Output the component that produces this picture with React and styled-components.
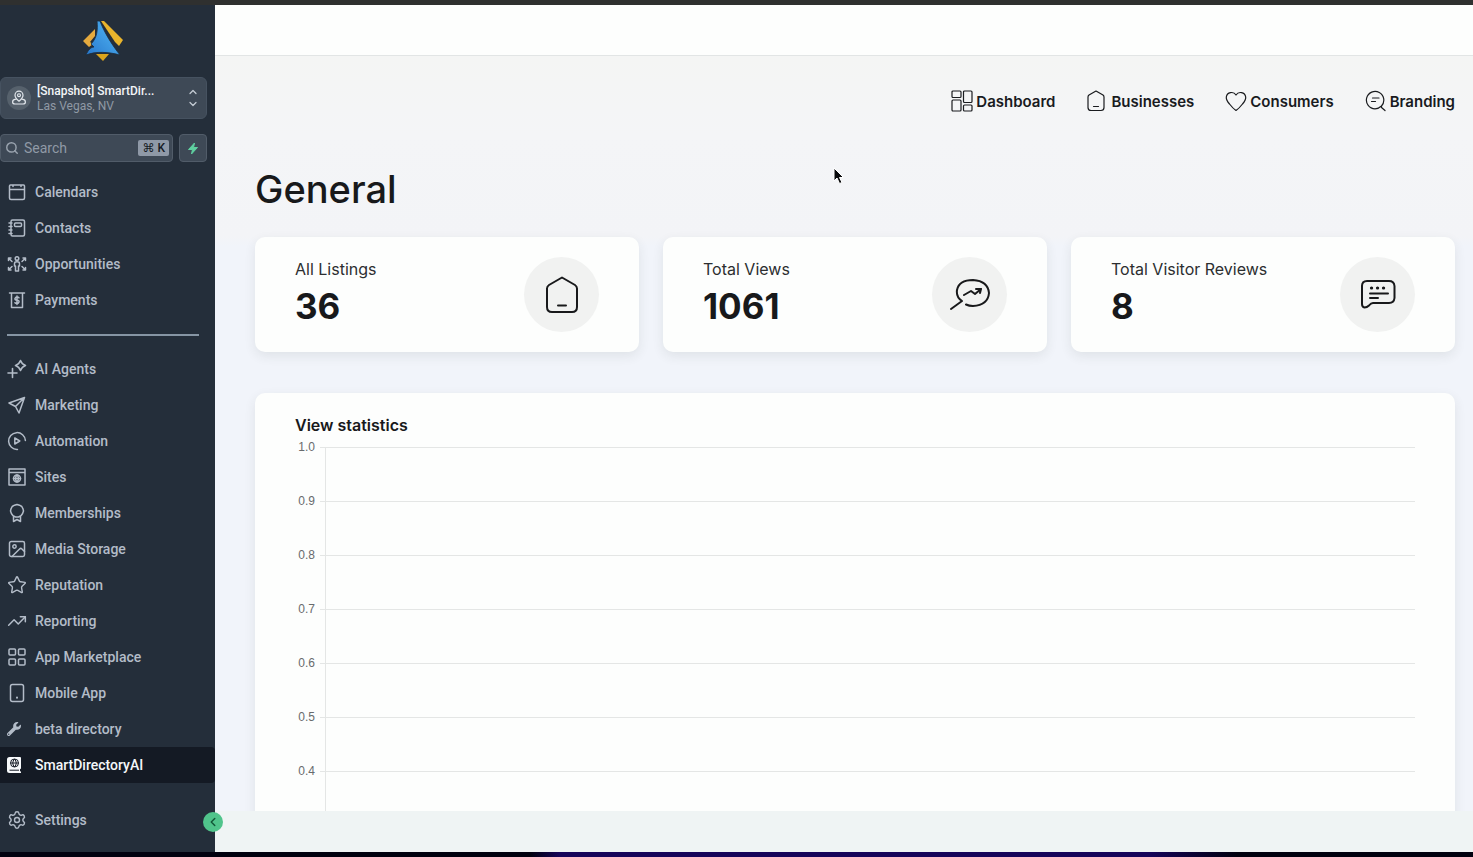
import React, { useState } from 'react';
import styled, { createGlobalStyle } from 'styled-components';
import { Search, Star, TrendingUp, Image, Settings, ChevronLeft, ChevronUp, ChevronDown } from 'lucide-react';
import { FaWrench } from 'react-icons/fa';

const GlobalStyle = createGlobalStyle`
  * {
    box-sizing: border-box;
  }
  body {
    margin: 0;
    font-family: Inter, "Liberation Sans", sans-serif;
    color: #18191b;
  }
  button, input {
    font: inherit;
    color: inherit;
  }
`;

const Shell = styled.div`
  display: flex;
  flex-direction: column;
  height: 100vh;
  position: relative;
`;

const TopEdge = styled.div`
  flex: 0 0 5px;
  background: #2f302f;
`;

const BottomEdge = styled.div`
  flex: 0 0 5px;
  background: linear-gradient(90deg, #01010f 0 36%, #16045a 38% 78%, #01010f 84%);
`;

const Body = styled.div`
  display: flex;
  flex: 1;
  min-height: 0;
`;

const Sidebar = styled.aside`
  flex: 0 0 215px;
  display: flex;
  flex-direction: column;
  position: relative;
  background: #242e3a;
  color: #b3bcc8;
  font-family: Roboto, sans-serif;
`;

const LogoLink = styled.a`
  display: flex;
  justify-content: center;
  padding: 15px 9px 15px 0;
`;

const AccountButton = styled.button`
  display: flex;
  align-items: center;
  gap: 6px;
  height: 42px;
  margin-right: 8px;
  padding: 0 7px 0 6px;
  border: 1px solid #465260;
  border-radius: 6px;
  background: #3e4956;
  text-align: left;
  cursor: pointer;
`;

const AccountIcon = styled.span`
  display: flex;
  align-items: center;
  justify-content: center;
  width: 24px;
  height: 24px;
  border-radius: 50%;
  background: #56616c;
  color: #e3e8ed;
`;

const AccountText = styled.span`
  flex: 1;
  display: flex;
  flex-direction: column;
  padding-top: 2px;
  font-size: 12px;
  line-height: 15px;
  color: #9099a5;
`;

const AccountName = styled.span`
  color: #f3f5f8;
  font-weight: 500;
`;

const Chevrons = styled.span`
  display: flex;
  flex-direction: column;
  color: #c4cbd4;
`;

const SearchRow = styled.div`
  display: flex;
  gap: 6px;
  margin: 15px 8px 12px 0;
`;

const SearchBox = styled.label`
  flex: 1;
  display: flex;
  align-items: center;
  gap: 5px;
  height: 28px;
  padding: 0 3px 0 4px;
  border: 1px solid #515c69;
  border-radius: 4px;
  background: #3e4956;
  color: #99a3ae;
`;

const SearchInput = styled.input`
  flex: 1;
  width: 0;
  padding: 0;
  border: 0;
  outline: 0;
  background: none;
  font-size: 14px;
  &::placeholder {
    color: #909aa6;
    opacity: 1;
  }
`;

const Shortcut = styled.kbd`
  padding: 0 4px;
  border-radius: 2px;
  background: #8f99a7;
  color: #151b24;
  font: 500 12px/16px Roboto, "DejaVu Sans", sans-serif;
`;

const QuickButton = styled.button`
  display: flex;
  align-items: center;
  justify-content: center;
  width: 28px;
  height: 28px;
  padding: 0;
  border: 1px solid #515c69;
  border-radius: 4px;
  background: #3e4956;
  cursor: pointer;
`;

const MenuLink = styled.a`
  display: flex;
  align-items: center;
  gap: 8px;
  height: 36px;
  padding: 0 7px;
  border-radius: 0 4px 4px 0;
  background: ${props => (props.$active ? '#141a24' : 'transparent')};
  color: ${props => (props.$active ? '#f5f7fa' : 'inherit')};
  font-size: 14px;
  font-weight: 500;
  text-decoration: none;
  svg {
    flex: none;
  }
`;

const Divider = styled.hr`
  width: 192px;
  height: 2px;
  margin: 16px 7px 15px;
  border: 0;
  background: #8695a4;
`;

const SidebarFooter = styled.div`
  margin-top: auto;
  padding-bottom: 14px;
`;

const CollapseButton = styled.button`
  position: absolute;
  right: -8px;
  bottom: 20px;
  z-index: 1;
  display: flex;
  align-items: center;
  justify-content: center;
  width: 20px;
  height: 20px;
  padding: 0;
  border: 0;
  border-radius: 50%;
  background: #50c48b;
  color: #125637;
  cursor: pointer;
`;

const Main = styled.main`
  flex: 1;
  min-width: 0;
  display: flex;
  flex-direction: column;
  background: #eff4f4;
`;

const TopBar = styled.header`
  flex: 0 0 51px;
  border-bottom: 1px solid #e2e5e5;
  background: #fdfefd;
`;

const Content = styled.div`
  flex: 1;
  min-height: 0;
  margin-bottom: 41px;
  padding: 30px 18px 0 40px;
  overflow: auto;
  scrollbar-width: none;
  background: linear-gradient(#f4f5f4, #f4f5f7 80px, #f3f4f7 180px, #f1f4fa 190px);
`;

const TopNav = styled.nav`
  display: flex;
  justify-content: flex-end;
  gap: 31px;
`;

const TopNavLink = styled.a`
  display: flex;
  align-items: center;
  gap: 3px;
  height: 30px;
  color: #191b1e;
  font-size: 15px;
  font-weight: 600;
  text-decoration: none;
`;

const Title = styled.h1`
  margin: 50px 0 24px;
  font-size: 38px;
  line-height: 47px;
  font-weight: 500;
`;

const Cards = styled.section`
  display: grid;
  grid-template-columns: repeat(3, 1fr);
  gap: 24px;
  margin-bottom: 41px;
`;

const Card = styled.article`
  display: flex;
  justify-content: space-between;
  align-items: flex-start;
  padding: 20px 40px;
  border-radius: 10px;
  background: #fdfefd;
  box-shadow: 0 4px 12px rgba(40, 50, 40, 0.09);
`;

const CardLabel = styled.div`
  font-size: 16px;
  line-height: 24px;
  color: #2c2e30;
`;

const CardValue = styled.div`
  font-size: 35px;
  line-height: 50px;
  font-weight: 700;
`;

const IconCircle = styled.div`
  display: flex;
  align-items: center;
  justify-content: center;
  width: 75px;
  height: 75px;
  border-radius: 50%;
  background: #f1f2f1;
`;

const ChartCard = styled.section`
  padding: 20px 40px;
  border-radius: 10px;
  background: #fdfefd;
  box-shadow: 0 4px 12px rgba(40, 50, 40, 0.09);
`;

const ChartTitle = styled.h2`
  margin: 0;
  font-size: 16px;
  line-height: 24px;
  font-weight: 600;
`;

const ChartSvg = styled.svg`
  display: block;
  width: 100%;
  height: 570px;
  text {
    fill: #686b6d;
    font: 12px "Liberation Sans", Arial, sans-serif;
    text-anchor: end;
  }
  line {
    stroke: #e4e6e5;
    shape-rendering: crispEdges;
  }
`;

const Pointer = styled.svg`
  position: absolute;
  left: 832px;
  top: 166px;
  pointer-events: none;
`;

function Icon({ children, size = 20, box = 20, width = 1.5 }) {
  return (
    <svg
      width={size}
      height={size}
      viewBox={`0 0 ${box} ${box}`}
      fill="none"
      stroke="currentColor"
      strokeWidth={width}
      strokeLinecap="round"
      strokeLinejoin="round"
      aria-hidden="true"
    >
      {children}
    </svg>
  );
}

function Logo() {
  return (
    <svg width="42" height="42" viewBox="0 0 42 42" aria-label="Home">
      <defs>
        <linearGradient id="sail" x1="0" y1="1" x2="1" y2="0">
          <stop offset="0" stopColor="#2878cc" />
          <stop offset="0.6" stopColor="#43a1e7" />
          <stop offset="1" stopColor="#328ede" />
        </linearGradient>
      </defs>
      <path d="M13 9 1 21 7 27 11 24 8 22 13 16Z" fill="#e5aa3e" />
      <path d="M19 1H22L41 20 37 26 33 22Z" fill="#e9b42c" />
      <path d="M14 34H27L21 41Z" fill="#daa41d" />
      <path d="M15 1H18C22 12 30 25 38 35 27 32 14 31 4 35 6 30 9 27 12 27L9 24C15 18 16 10 15 1Z" fill="url(#sail)" stroke="#1d2c3c" strokeWidth="0.8" />
    </svg>
  );
}

const icons = {
  calendar: (
    <Icon>
      <path d="M3.500 3h13a1 1 0 0 1 1 1v12a1.500 1.500 0 0 1-1.500 1.500H4A1.500 1.500 0 0 1 2.500 16V4a1 1 0 0 1 1-1ZM2.500 7.500h15M6 3v1.500M14 3v1.500" />
    </Icon>
  ),
  contacts: (
    <Icon>
      <rect x="4" y="2" width="13.500" height="16" rx="1.500" />
      <rect x="7.500" y="5" width="7" height="3.500" rx="1" />
      <path d="M2 5h3M2 8.500h3M2 12h3M2 15.500h3" />
    </Icon>
  ),
  opportunities: (
    <Icon>
      <circle cx="10" cy="4.500" r="1.800" />
      <path d="M7.500 11V9.500Q7.500 7.800 10 7.800T12.500 9.500V12H11.500V17H8.500V12H7.500Z" />
      <path d="M1.500 6.500V4H4M1.500 4 5 7.500M18.500 6.500V4H16M18.500 4 15 7.500M1.500 13.500V16H4M1.500 16 5 12.500M18.500 13.500V16H16M18.500 16 15 12.500" />
    </Icon>
  ),
  payments: (
    <Icon>
      <path d="M2.500 3h15M4.500 3v14.500h11V3" />
      <path d="M12 7.800Q11.500 7 10 7T8 8.500 10 10.200 12 12 10 13.500 8 12.700M10 6v8.500" />
    </Icon>
  ),
  agents: (
    <Icon width={1.6}>
      <path d="M13.500 1.500Q14.800 5.200 18.500 6.500 14.800 7.800 13.500 11.500 12.200 7.800 8.500 6.500 12.200 5.200 13.500 1.500ZM5.500 9.500v9M1 14h9" />
    </Icon>
  ),
  marketing: (
    <Icon>
      <path d="M17.500 2.500 2 8l6.500 3.500L12 18ZM8.500 11.500l9-9" />
    </Icon>
  ),
  automation: (
    <Icon>
      <path d="M10.500 18.400A8.400 8.400 0 1 1 18.400 9.500M7.800 7v6l5-3Z" />
    </Icon>
  ),
  sites: (
    <Icon>
      <path d="M2 2h16v16H2ZM2 5.500h16" />
      <circle cx="10" cy="11.500" r="3.500" />
      <path d="M6.500 11.500h7M10 8Q7 11.500 10 15M10 8q3 3.500 0 7" />
    </Icon>
  ),
  memberships: (
    <Icon>
      <path d="M10 1.500 12.500 2.200 14.800 3.500 16 5.800 16.500 8 15.600 10.500 14 12.700 11.500 14H8.500L6 12.700 4.400 10.500 3.500 8 4 5.800 5.200 3.500 7.500 2.200ZM6.500 13.200V18.500L10 16.500 13.500 18.500V13.200" />
    </Icon>
  ),
  media: <Image size={20} strokeWidth={1.8} />,
  reputation: <Star size={20} strokeWidth={1.7} />,
  reporting: <TrendingUp size={20} strokeWidth={1.8} />,
  marketplace: (
    <Icon>
      <rect x="2" y="2" width="6.500" height="6" rx="1" />
      <rect x="11.500" y="2" width="6.500" height="6" rx="1" />
      <rect x="2" y="12" width="6.500" height="6" rx="1" />
      <rect x="11.500" y="12" width="6.500" height="6" rx="1" />
    </Icon>
  ),
  mobile: (
    <Icon>
      <rect x="3.500" y="1.500" width="13" height="17" rx="2" />
      <path d="M10 14.500v0.200" strokeWidth="2" />
    </Icon>
  ),
  wrench: <FaWrench size={14} />,
  directory: (
    <svg width="14" height="16" viewBox="0 0 14 16" fill="none">
      <path d="M2.500 0H13a1 1 0 0 1 1 1v10.500l-1 .7V14l1 .7V16H2.500A2.500 2.500 0 0 1 0 13.500v-11A2.500 2.500 0 0 1 2.500 0Z" fill="#f7f9fb" />
      <path d="M2.500 13.200h9.500M3.500 6h8M7.500 2Q4 6 7.500 10M7.500 2q3.500 4 0 8" stroke="#141a24" strokeWidth="1" />
      <circle cx="7.500" cy="6" r="4" stroke="#141a24" strokeWidth="1" />
    </svg>
  ),
  settings: <Settings size={20} strokeWidth={1.7} />
};

const mainMenu = [
  { icon: 'calendar', label: 'Calendars' },
  { icon: 'contacts', label: 'Contacts' },
  { icon: 'opportunities', label: 'Opportunities' },
  { icon: 'payments', label: 'Payments' }
];

const toolsMenu = [
  { icon: 'agents', label: 'AI Agents' },
  { icon: 'marketing', label: 'Marketing' },
  { icon: 'automation', label: 'Automation' },
  { icon: 'sites', label: 'Sites' },
  { icon: 'memberships', label: 'Memberships' },
  { icon: 'media', label: 'Media Storage' },
  { icon: 'reputation', label: 'Reputation' },
  { icon: 'reporting', label: 'Reporting' },
  { icon: 'marketplace', label: 'App Marketplace' },
  { icon: 'mobile', label: 'Mobile App' },
  { icon: 'wrench', label: 'beta directory' },
  { icon: 'directory', label: 'SmartDirectoryAI' }
];

const MenuIcon = styled.span`
  flex: 0 0 20px;
  display: flex;
  justify-content: ${props => (props.$start ? 'flex-start' : 'center')};
`;

function MenuItem({ item, active, onSelect }) {
  return (
    <MenuLink href="#" $active={active} onClick={() => onSelect(item.label)}>
      <MenuIcon $start={item.icon === 'wrench' || item.icon === 'directory'}>{icons[item.icon]}</MenuIcon>
      {item.label}
    </MenuLink>
  );
}

const topLinks = [
  {
    label: 'Dashboard',
    icon: (
      <>
        <rect x="1" y="1" width="9" height="6.500" rx="1" />
        <rect x="12.500" y="1" width="8.500" height="11.500" rx="1" />
        <rect x="1" y="10" width="9" height="11" rx="1" />
        <rect x="12.500" y="15" width="8.500" height="6" rx="1" />
      </>
    )
  },
  { label: 'Businesses', icon: <path d="M10 1 17 5q1 .8 1 2V17.500q0 3-3 3H5q-3 0-3-3V7Q2 5.800 3 5ZM7.500 16.500h5" /> },
  { label: 'Consumers', icon: <path d="M11 20.500Q8 18.500 4.500 14 1 10 1.300 7A5.300 5.300 0 0 1 11 5a5.300 5.300 0 0 1 9.700 2q.3 3-3.200 7-3.500 4.500-6.500 6.500Z" /> },
  { label: 'Branding', icon: <path d="M16.500 16A8.700 8.700 0 1 0 10 18.800Q13.500 18.800 16.500 16L16.500 17.500 20 20.500M7.500 8h6.500M6.500 11.500h4" /> }
];

const stats = [
  {
    label: 'All Listings',
    value: '36',
    icon: (
      <Icon size={38} box={38} width={2}>
        <path d="M19 1.500 32 9q2 1.300 2 3.500V31q0 5-5 5H9q-5 0-5-5V12.500Q4 10.300 6 9ZM15 29.500h8" />
      </Icon>
    )
  },
  {
    label: 'Total Views',
    value: '1061',
    icon: (
      <Icon size={40} box={40} width={2}>
        <path d="M1 34 12 26Q6 22 7 15 9 5 23 5q15 1 16 13-1 12-16 13-4 0-7-1.500M14 20 21 16 25 19 31 14M26 14h5l-1 4" />
      </Icon>
    )
  },
  {
    label: 'Total Visitor Reviews',
    value: '8',
    icon: (
      <Icon size={38} box={38} width={2}>
        <path d="M8 5H30q5 0 5.500 5V22q-.5 5-5.500 5H14q-2 0-4 2.500-2 2-4.500 2Q3 31 3 28V10q0-5 5-5ZM11 17.500H29M11 22h8" />
        <path d="M12.500 12h.1M18.500 12h.1M24.500 12h.1" strokeWidth="3.200" />
      </Icon>
    )
  }
];

const ticks = ['1.0', '0.9', '0.8', '0.7', '0.6', '0.5', '0.4'];

function Chart() {
  return (
    <ChartSvg role="img" aria-label="View statistics chart">
      {ticks.map((tick, i) => (
        <g key={tick}>
          <text x="20" y={14 + i * 54}>{tick}</text>
          <line x1="25" x2="100%" y1={10 + i * 54} y2={10 + i * 54} />
        </g>
      ))}
      <line x1="30" x2="30" y1="10" y2="550" />
    </ChartSvg>
  );
}

function App() {
  const [selected, setSelected] = useState('SmartDirectoryAI');

  const renderItem = item => (
    <MenuItem key={item.label} item={item} active={selected === item.label} onSelect={setSelected} />
  );

  return (
    <Shell>
      <GlobalStyle />
      <TopEdge />
      <Body>
        <Sidebar>
          <LogoLink href="#"><Logo /></LogoLink>
          <AccountButton type="button">
            <AccountIcon>
              <Icon size={16} width={1.5}>
                <path d="M10 14Q5 9.500 5 6.500a5 5 0 0 1 10 0Q15 9.500 10 14ZM6 11.500Q2 12 2 15q0 2.500 3 2.500h10q3 0 3-2.500 0-3-4-3.500" />
                <circle cx="10" cy="6.500" r="1.800" />
              </Icon>
            </AccountIcon>
            <AccountText>
              <AccountName>[Snapshot] SmartDir...</AccountName>
              <span>Las Vegas, NV</span>
            </AccountText>
            <Chevrons>
              <ChevronUp size={12} strokeWidth={2.5} />
              <ChevronDown size={12} strokeWidth={2.5} />
            </Chevrons>
          </AccountButton>
          <SearchRow>
            <SearchBox>
              <Search size={14} strokeWidth={2.5} />
              <SearchInput type="text" placeholder="Search" aria-label="Search" />
              <Shortcut>⌘ K</Shortcut>
            </SearchBox>
            <QuickButton type="button" aria-label="Quick actions">
              <svg width="12" height="13" viewBox="0 0 12 13">
                <path d="M7.500 1 1.500 7.500h4L4.500 12 10.500 5.500H6.500Z" fill="#5fd0a0" stroke="#5fd0a0" strokeLinejoin="round" />
              </svg>
            </QuickButton>
          </SearchRow>
          {mainMenu.map(renderItem)}
          <Divider />
          {toolsMenu.map(renderItem)}
          <SidebarFooter>
            {renderItem({ icon: 'settings', label: 'Settings' })}
          </SidebarFooter>
          <CollapseButton type="button" aria-label="Collapse sidebar">
            <ChevronLeft size={14} strokeWidth={2.5} />
          </CollapseButton>
        </Sidebar>
        <Main>
          <TopBar />
          <Content>
            <TopNav>
              {topLinks.map(link => (
                <TopNavLink key={link.label} href="#">
                  <Icon size={22} box={22} width={1.2}>{link.icon}</Icon>
                  {link.label}
                </TopNavLink>
              ))}
            </TopNav>
            <Title>General</Title>
            <Cards>
              {stats.map(stat => (
                <Card key={stat.label}>
                  <div>
                    <CardLabel>{stat.label}</CardLabel>
                    <CardValue>{stat.value}</CardValue>
                  </div>
                  <IconCircle>{stat.icon}</IconCircle>
                </Card>
              ))}
            </Cards>
            <ChartCard>
              <ChartTitle>View statistics</ChartTitle>
              <Chart />
            </ChartCard>
          </Content>
        </Main>
      </Body>
      <BottomEdge />
      <Pointer width="13" height="20" viewBox="0 0 13 20">
        <path d="M2 2v13l3-3 2.500 5.500 2.500-1-2.500-5h4Z" fill="#08090b" stroke="#fff" strokeWidth="1" />
      </Pointer>
    </Shell>
  );
}

export default App;
